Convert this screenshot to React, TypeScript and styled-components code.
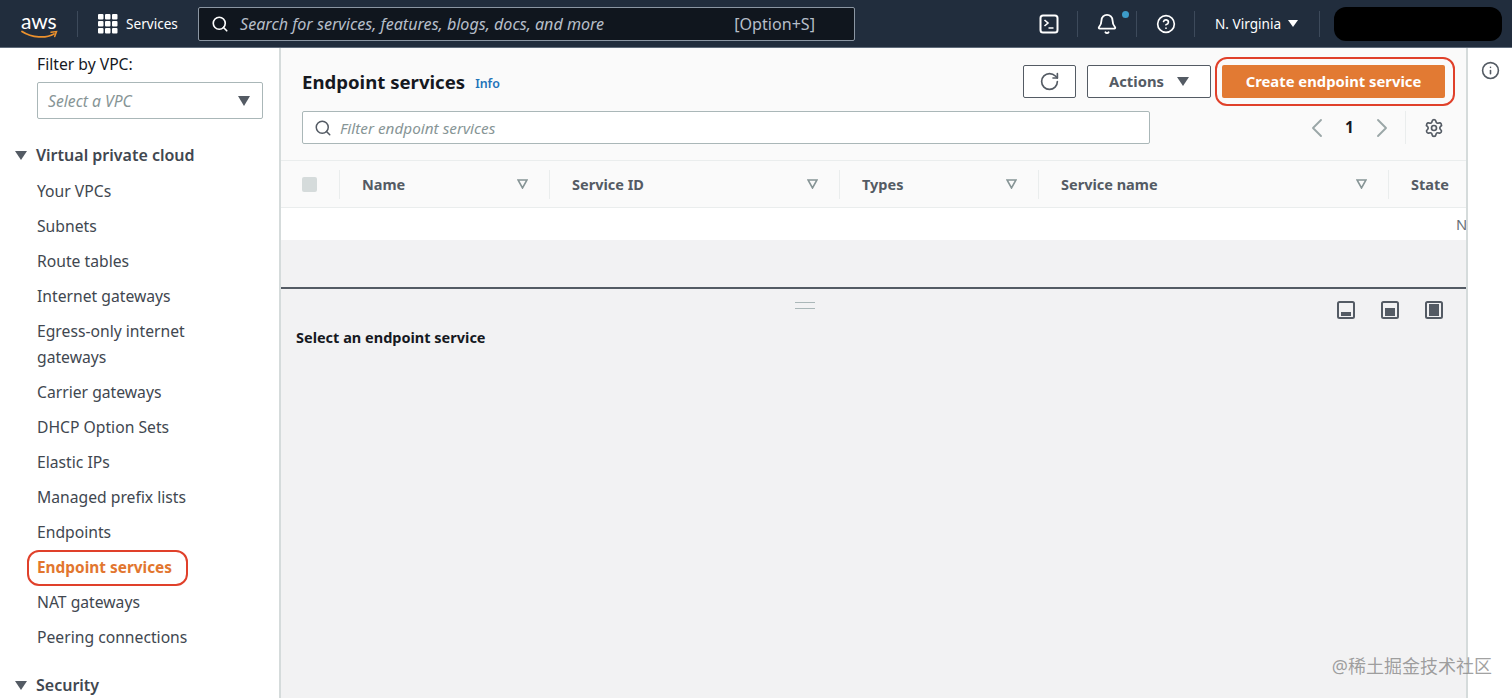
import styled, { createGlobalStyle } from "styled-components"
import { Bell, ChevronLeft, ChevronRight, CircleHelp, Info, RotateCw, Search, Settings } from "lucide-react"

const GlobalStyle = createGlobalStyle`
  html, body {
    margin: 0;
    height: 698px;
    overflow: hidden;
    background: #fff;
    font-family: "Noto Sans", "Noto Sans CJK SC", sans-serif;
  }
`

const Page = styled.div`
  width: 1512px;
  height: 698px;
  position: relative;
  display: flex;
  flex-direction: column;
  overflow: hidden;
`

/* top bar */
const TopBar = styled.header`
  height: 47px;
  flex: none;
  display: flex;
  align-items: center;
  background: #212d3d;
  border-bottom: 1px solid #5f6b7a;
  color: #fff;
`

const LogoBox = styled.div`
  width: 56px;
  margin-left: 21px;
  flex: none;
  position: relative;
  height: 30px;
`

const LogoText = styled.span`
  display: block;
  font: 400 21px/21px "Lato", sans-serif;
  letter-spacing: -0.2px;
  margin-top: 1px;
`

const Smile = styled.svg`
  position: absolute;
  left: 0;
  top: 21px;
`

const BarDivider = styled.span`
  width: 1px;
  height: 26px;
  flex: none;
  background: #3d4a5b;
`

const ServicesButton = styled.div`
  display: flex;
  align-items: center;
  gap: 8px;
  margin-left: 20px;
  width: 100px;
  flex: none;
  font-size: 13.6px;
`

const SearchBox = styled.div`
  width: 657px;
  height: 34px;
  box-sizing: border-box;
  flex: none;
  display: flex;
  align-items: center;
  padding: 0 39px 0 12px;
  gap: 11px;
  background: #10161e;
  border: 1px solid #8b96a3;
  border-radius: 2px;
  color: #b6bec9;
  font-size: 16.1px;
  svg {
    color: #fff;
  }
`

const SearchHint = styled.span`
  font-style: italic;
  flex: 1;
`

const IconSlot = styled.div<{ $width: number; $offset?: number }>`
  width: ${(p) => p.$width}px;
  margin-left: ${(p) => p.$offset ?? 0}px;
  flex: none;
  display: flex;
  justify-content: center;
  align-items: center;
  position: relative;
`

const Dot = styled.span`
  position: absolute;
  width: 7px;
  height: 7px;
  border-radius: 50%;
  background: #3d9cc9;
  top: -2px;
  right: 7px;
`

const Region = styled.div`
  width: 124px;
  flex: none;
  display: flex;
  align-items: center;
  padding-left: 20px;
  box-sizing: border-box;
  gap: 7px;
  font-size: 13.6px;
`

const Redacted = styled.div`
  width: 168px;
  height: 34px;
  flex: none;
  margin-left: 14px;
  background: #000;
  border-radius: 12px;
`

/* body */
const Body = styled.div`
  flex: 1;
  display: flex;
  min-height: 0;
`

const Sidebar = styled.nav`
  width: 281px;
  flex: none;
  box-sizing: border-box;
  padding: 5px 17px 0 37px;
  border-right: 2px solid #d5dbdb;
  background: #fff;
  color: #414750;
  font-size: 15.7px;
  line-height: 26px;
`

const FilterLabel = styled.div`
  color: #16191f;
  height: 22px;
  line-height: 22px;
`

const SelectBox = styled.div`
  width: 226px;
  height: 37px;
  box-sizing: border-box;
  margin-top: 7px;
  display: flex;
  align-items: center;
  justify-content: space-between;
  padding: 0 12px 0 10px;
  background: #fff;
  border: 1px solid #aab7b8;
  border-radius: 2px;
  color: #879596;
  font-style: italic;
`

const Triangle = styled.span<{ $size: number; $color: string }>`
  display: inline-block;
  flex: none;
  width: 0;
  height: 0;
  border-left: ${(p) => p.$size}px solid transparent;
  border-right: ${(p) => p.$size}px solid transparent;
  border-top: ${(p) => p.$size * 1.55}px solid ${(p) => p.$color};
`

const SectionHead = styled.div<{ $top: number }>`
  display: flex;
  align-items: center;
  gap: 9px;
  margin: ${(p) => p.$top}px 0 0 -22px;
  font-size: 16px;
  font-weight: 600;
  color: #414750;
`

const NavList = styled.div`
  display: flex;
  flex-direction: column;
  gap: 9px;
  margin-top: 10px;
`

const NavItem = styled.div`
  white-space: pre-line;
`

const ActiveItem = styled.div`
  width: fit-content;
  margin: -4px 0 -6px -10px;
  padding: 3px 14px 3px 8px;
  border: 2px solid #e0402a;
  border-radius: 12px;
  color: #e2762f;
  font-size: 15.4px;
  font-weight: 700;
`

const Main = styled.main`
  width: 1185px;
  flex: none;
  display: flex;
  flex-direction: column;
  background: #f2f2f3;
  border-right: 2px solid #d5dbdb;
  overflow: hidden;
`

const Panel = styled.section`
  height: 113px;
  flex: none;
  box-sizing: border-box;
  background: #fafafa;
  border-bottom: 1px solid #eaeded;
`

const TitleRow = styled.div`
  display: flex;
  align-items: center;
  padding: 9px 11px 0 21px;
`

const Title = styled.h1`
  margin: 0;
  font-size: 18.6px;
  font-weight: 700;
  color: #16191f;
`

const InfoLink = styled.span`
  margin-left: 10px;
  margin-top: 3px;
  font-size: 12.4px;
  font-weight: 600;
  color: #2273b9;
`

const Toolbar = styled.div`
  margin-left: auto;
  display: flex;
  align-items: center;
`

const OutlineButton = styled.div<{ $width: number }>`
  width: ${(p) => p.$width}px;
  height: 33px;
  box-sizing: border-box;
  display: flex;
  align-items: center;
  justify-content: center;
  gap: 13px;
  margin-right: 11px;
  padding-bottom: 1px;
  background: #fff;
  border: 1px solid #545b64;
  border-radius: 2px;
  color: #545b64;
  font-size: 14.8px;
  font-weight: 700;
`

const Callout = styled.div`
  margin-left: -7px;
  padding: 6px 8px 6px 5px;
  border: 2px solid #e0402a;
  border-radius: 12px;
`

const PrimaryButton = styled.div`
  width: 223px;
  height: 33px;
  box-sizing: border-box;
  padding-bottom: 2px;
  display: flex;
  align-items: center;
  justify-content: center;
  background: #e27a33;
  border-radius: 2px;
  color: #fff;
  font-size: 14.8px;
  font-weight: 700;
`

const FilterRow = styled.div`
  display: flex;
  align-items: center;
  margin-top: 5px;
  padding-left: 21px;
`

const FilterInput = styled.div`
  width: 848px;
  height: 33px;
  box-sizing: border-box;
  display: flex;
  align-items: center;
  gap: 8px;
  padding: 0 11px;
  background: #fff;
  border: 1px solid #aab7b8;
  border-radius: 2px;
  color: #879596;
  font-size: 15.3px;
  font-style: italic;
  svg {
    color: #545b64;
    font-style: normal;
  }
`

const Pager = styled.div`
  margin-left: auto;
  display: flex;
  align-items: center;
  color: #16191f;
  font-size: 15.4px;
  font-weight: 700;
`

const PagerNumber = styled.span`
  width: 33px;
  text-align: center;
`

const PagerDivider = styled.span`
  width: 1px;
  height: 33px;
  margin: 0 18px 0 7px;
  background: #eaeded;
`

const GearSlot = styled.span`
  display: flex;
  margin-right: 22px;
  color: #545b64;
`

const TableHead = styled.div`
  height: 47px;
  flex: none;
  box-sizing: border-box;
  display: grid;
  grid-template-columns: 58px 210px 290px 199px 350px 200px;
  align-items: center;
  background: #fafafa;
  border-bottom: 1px solid #eaeded;
  color: #545b64;
  font-size: 14.5px;
  font-weight: 700;
`

const HeadCell = styled.div`
  display: flex;
  align-items: center;
  justify-content: space-between;
  height: 29px;
  padding: 0 21px 0 22px;
  border-left: 1px solid #eaeded;
  white-space: nowrap;
`

const CheckCell = styled.div`
  padding-left: 21px;
`

const Checkbox = styled.div`
  width: 15px;
  height: 15px;
  border-radius: 2px;
  background: #d5dbdb;
`

const EmptyRow = styled.div`
  height: 32px;
  flex: none;
  background: #fff;
  color: #687078;
  font-size: 14.8px;
  line-height: 32px;
  padding-left: 1175px;
  white-space: nowrap;
`

const Spacer = styled.div`
  height: 47px;
  flex: none;
  border-bottom: 2px solid #545b64;
`

const SplitPanel = styled.section`
  flex: 1;
  padding: 12px 23px 0 15px;
`

const SplitBar = styled.div`
  display: flex;
  align-items: center;
  height: 18px;
`

const Handle = styled.span`
  width: 20px;
  height: 5px;
  margin-left: 499px;
  margin-right: auto;
  margin-top: -9px;
  border-top: 1px solid #aab7b8;
  border-bottom: 1px solid #aab7b8;
`

const SplitIcon = styled.svg`
  margin-left: 26px;
  flex: none;
`

const SplitTitle = styled.h2`
  margin: 5px 0 0;
  font-size: 14.5px;
  font-weight: 700;
  line-height: 26px;
  color: #16191f;
`

const Rail = styled.aside`
  flex: 1;
  background: #fff;
  display: flex;
  justify-content: center;
  padding-top: 13px;
  color: #545b64;
`

const Watermark = styled.div`
  position: absolute;
  right: 20px;
  bottom: 20px;
  font-size: 18px;
  line-height: 24px;
  color: rgba(120, 120, 120, 0.7);
`

const navFirst = ["Your VPCs", "Subnets", "Route tables", "Internet gateways", "Egress-only internet\ngateways", "Carrier gateways", "DHCP Option Sets", "Elastic IPs", "Managed prefix lists", "Endpoints"]
const navLast = ["NAT gateways", "Peering connections"]
const columns = ["Name", "Service ID", "Types", "Service name"]
// how much of the pane each view icon fills
const splitViews = [4, 8, 12]

function SortMark() {
  return (
    <svg width="11" height="10" viewBox="0 0 11 10">
      <path d="M1 1h9L5.5 9z" fill="none" stroke="#879596" strokeWidth="1.6" />
    </svg>
  )
}

function GridIcon() {
  const cells = [0, 7, 14]
  return (
    <svg width="20" height="20" viewBox="0 0 20 20" fill="#fff">
      {cells.map((y) => cells.map((x) => <rect key={`${x}-${y}`} x={x} y={y} width="5.5" height="5.5" rx="1" />))}
    </svg>
  )
}

function ShellIcon() {
  return (
    <svg width="20" height="20" viewBox="0 0 20 20" fill="none" stroke="#fff" strokeWidth="2">
      <rect x="1.5" y="1.5" width="17" height="17" rx="2.5" />
      <path d="M5.5 6l3.5 3-3.5 3M9.5 14h5" strokeWidth="1.6" />
    </svg>
  )
}

export default function App() {
  return (
    <Page>
      <GlobalStyle />
      <TopBar>
        <LogoBox>
          <LogoText>aws</LogoText>
          <Smile width="37" height="10" viewBox="0 0 37 10" fill="none">
            <path d="M1 1.5C11 8 25 8.5 33 4" stroke="#ec912d" strokeWidth="1.8" strokeLinecap="round" />
            <path d="M30 2.2l5.5-.6-1.8 5" stroke="#ec912d" strokeWidth="1.5" strokeLinecap="round" />
          </Smile>
        </LogoBox>
        <BarDivider />
        <ServicesButton>
          <GridIcon />
          Services
        </ServicesButton>
        <SearchBox>
          <Search size={18} strokeWidth={2.2} />
          <SearchHint>Search for services, features, blogs, docs, and more</SearchHint>
          <span>[Option+S]</span>
        </SearchBox>
        <IconSlot $width={57} $offset={165}>
          <ShellIcon />
        </IconSlot>
        <BarDivider />
        <IconSlot $width={58}>
          <Bell size={22} strokeWidth={2} />
          <Dot />
        </IconSlot>
        <BarDivider />
        <IconSlot $width={57}>
          <CircleHelp size={20} strokeWidth={2} />
        </IconSlot>
        <BarDivider />
        <Region>
          N. Virginia
          <Triangle $size={5} $color="#fff" />
        </Region>
        <BarDivider />
        <Redacted />
      </TopBar>

      <Body>
        <Sidebar>
          <FilterLabel>Filter by VPC:</FilterLabel>
          <SelectBox>
            Select a VPC
            <Triangle $size={6.5} $color="#545b64" />
          </SelectBox>
          <SectionHead $top={23}>
            <Triangle $size={6} $color="#545b64" />
            Virtual private cloud
          </SectionHead>
          <NavList>
            {navFirst.map((item) => (
              <NavItem key={item}>{item}</NavItem>
            ))}
            <ActiveItem>Endpoint services</ActiveItem>
            {navLast.map((item) => (
              <NavItem key={item}>{item}</NavItem>
            ))}
          </NavList>
          <SectionHead $top={22}>
            <Triangle $size={6} $color="#545b64" />
            Security
          </SectionHead>
        </Sidebar>

        <Main>
          <Panel>
            <TitleRow>
              <Title>Endpoint services</Title>
              <InfoLink>Info</InfoLink>
              <Toolbar>
                <OutlineButton $width={53}>
                  <RotateCw size={21} strokeWidth={1.9} />
                </OutlineButton>
                <OutlineButton $width={124}>
                  Actions
                  <Triangle $size={6} $color="#545b64" />
                </OutlineButton>
                <Callout>
                  <PrimaryButton>Create endpoint service</PrimaryButton>
                </Callout>
              </Toolbar>
            </TitleRow>
            <FilterRow>
              <FilterInput>
                <Search size={18} strokeWidth={2} />
                Filter endpoint services
              </FilterInput>
              <Pager>
                <ChevronLeft size={32} strokeWidth={1.4} color="#9aa6a7" />
                <PagerNumber>1</PagerNumber>
                <ChevronRight size={32} strokeWidth={1.4} color="#9aa6a7" />
                <PagerDivider />
                <GearSlot>
                  <Settings size={20} strokeWidth={2} />
                </GearSlot>
              </Pager>
            </FilterRow>
          </Panel>

          <TableHead>
            <CheckCell>
              <Checkbox />
            </CheckCell>
            {columns.map((name) => (
              <HeadCell key={name}>
                {name}
                <SortMark />
              </HeadCell>
            ))}
            <HeadCell>State</HeadCell>
          </TableHead>
          <EmptyRow>No</EmptyRow>
          <Spacer />

          <SplitPanel>
            <SplitBar>
              <Handle />
              {splitViews.map((fill) => (
                <SplitIcon key={fill} width="18" height="18" viewBox="0 0 18 18">
                  <rect x="1" y="1" width="16" height="16" rx="1.5" fill="#f2f2f3" stroke="#545b64" strokeWidth="2" />
                  <rect x="4" y={15 - fill} width="10" height={fill} fill="#545b64" />
                </SplitIcon>
              ))}
            </SplitBar>
            <SplitTitle>Select an endpoint service</SplitTitle>
          </SplitPanel>
        </Main>

        <Rail>
          <Info size={19} strokeWidth={2} />
        </Rail>
      </Body>
      <Watermark>@稀土掘金技术社区</Watermark>
    </Page>
  )
}
